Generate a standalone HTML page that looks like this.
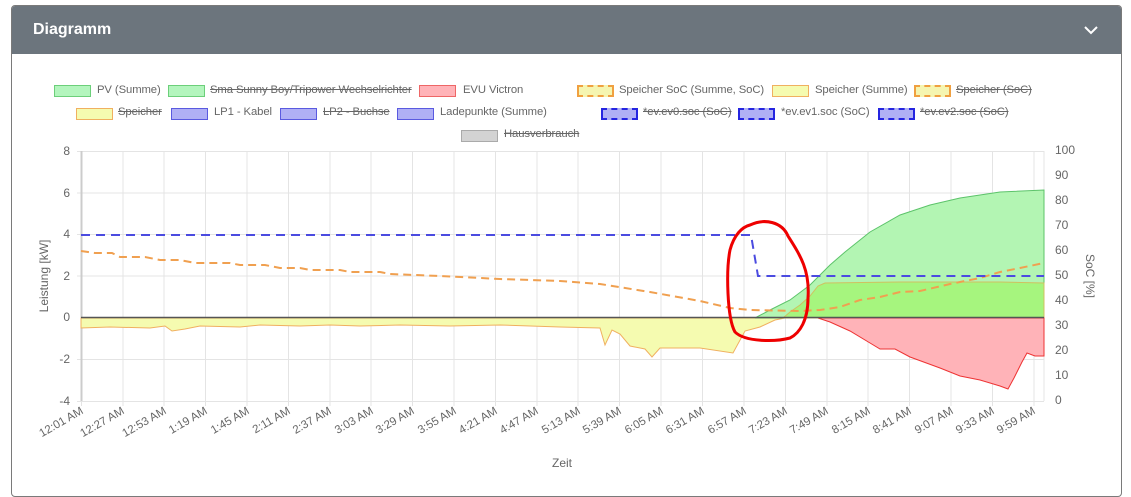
<!DOCTYPE html>
<html><head><meta charset="utf-8"><style>
body{margin:0;width:1131px;height:481px;background:#fff;font-family:"Liberation Sans",sans-serif;overflow:hidden;position:relative}
.card{position:absolute;left:11px;top:5px;width:1109px;height:490px;border:1px solid #7a7a7a;border-radius:4px;background:#fff;overflow:hidden}
.hdr{height:48px;background:#6c757d;color:#fff;font-weight:bold;font-size:16px;line-height:48px;padding-left:21px}
.lg{position:absolute;font-size:11.3px;color:#666;white-space:nowrap;letter-spacing:-0.1px}
.bx{position:absolute;width:37px;height:12px;box-sizing:border-box}
.s{text-decoration:line-through}
.leg{position:absolute;left:0;top:2px;width:1131px;height:150px}
</style></head><body>
<div class="card"><div class="hdr">Diagramm</div></div>
<svg style="position:absolute;left:1083px;top:24px" width="16" height="12"><path d="M2 3 L8 9 L14 3" stroke="#fff" stroke-width="2" fill="none"/></svg>
<div class="leg">
<div class="bx" style="left:54px;top:83px;background:#b3f5bd;border:1px solid #6ccf7a"></div><div class="lg" style="left:97px;top:82px">PV (Summe)</div>
<div class="bx" style="left:168px;top:83px;background:#b3f5bd;border:1px solid #6ccf7a"></div><div class="lg s" style="left:210px;top:82px">Sma Sunny Boy/Tripower Wechselrichter</div>
<div class="bx" style="left:419px;top:83px;background:#ffb3b8;border:1px solid #e66"></div><div class="lg" style="left:463px;top:82px">EVU Victron</div>
<div class="bx" style="left:577px;top:83px;background:#f5f5b0;border:2px dashed #f0a040"></div><div class="lg" style="left:619px;top:82px">Speicher SoC (Summe, SoC)</div>
<div class="bx" style="left:772px;top:83px;background:#f5fbb0;border:1px solid #f0b060"></div><div class="lg" style="left:815px;top:82px">Speicher (Summe)</div>
<div class="bx" style="left:914px;top:83px;background:#f5f5b0;border:2px dashed #f0a040"></div><div class="lg s" style="left:956px;top:82px">Speicher (SoC)</div>

<div class="bx" style="left:76px;top:106px;background:#f5fbb0;border:1px solid #f0b060"></div><div class="lg s" style="left:118px;top:104px">Speicher</div>
<div class="bx" style="left:171px;top:106px;background:#b0b0f5;border:1px solid #5a5ae0"></div><div class="lg" style="left:214px;top:104px">LP1 - Kabel</div>
<div class="bx" style="left:280px;top:106px;background:#b0b0f5;border:1px solid #5a5ae0"></div><div class="lg s" style="left:323px;top:104px">LP2 - Buchse</div>
<div class="bx" style="left:397px;top:106px;background:#b0b0f5;border:1px solid #5a5ae0"></div><div class="lg" style="left:440px;top:104px">Ladepunkte (Summe)</div>
<div class="bx" style="left:601px;top:106px;background:#b0b0f5;border:2px dashed #2525e0"></div><div class="lg s" style="left:643px;top:104px">*ev.ev0.soc (SoC)</div>
<div class="bx" style="left:738px;top:106px;background:#b0b0f5;border:2px dashed #2525e0"></div><div class="lg" style="left:781px;top:104px">*ev.ev1.soc (SoC)</div>
<div class="bx" style="left:878px;top:106px;background:#b0b0f5;border:2px dashed #2525e0"></div><div class="lg s" style="left:920px;top:104px">*ev.ev2.soc (SoC)</div>
<div class="bx" style="left:461px;top:128px;background:#d3d3d3;border:1px solid #aaa"></div><div class="lg s" style="left:504px;top:126px">Hausverbrauch</div>
</div>
<svg style="position:absolute;left:0;top:0" width="1131" height="481" font-family="Liberation Sans, sans-serif" font-size="12" fill="#666">
<g stroke="#e4e4e4" stroke-width="1">
<line x1="77" y1="151.5" x2="1044" y2="151.5"/><line x1="77" y1="193" x2="1044" y2="193"/><line x1="77" y1="234.5" x2="1044" y2="234.5"/><line x1="77" y1="276" x2="1044" y2="276"/><line x1="77" y1="359.5" x2="1044" y2="359.5"/><line x1="77" y1="401.5" x2="1044" y2="401.5"/>
<line x1="81.5" y1="151" x2="81.5" y2="406"/><line x1="123" y1="151" x2="123" y2="406"/><line x1="164" y1="151" x2="164" y2="406"/><line x1="205.5" y1="151" x2="205.5" y2="406"/><line x1="247" y1="151" x2="247" y2="406"/><line x1="288.5" y1="151" x2="288.5" y2="406"/><line x1="330" y1="151" x2="330" y2="406"/><line x1="371" y1="151" x2="371" y2="406"/><line x1="412.5" y1="151" x2="412.5" y2="406"/><line x1="454" y1="151" x2="454" y2="406"/><line x1="495.5" y1="151" x2="495.5" y2="406"/><line x1="537" y1="151" x2="537" y2="406"/><line x1="578" y1="151" x2="578" y2="406"/><line x1="619.5" y1="151" x2="619.5" y2="406"/><line x1="661" y1="151" x2="661" y2="406"/><line x1="702.5" y1="151" x2="702.5" y2="406"/><line x1="744" y1="151" x2="744" y2="406"/><line x1="785.5" y1="151" x2="785.5" y2="406"/><line x1="827" y1="151" x2="827" y2="406"/><line x1="868" y1="151" x2="868" y2="406"/><line x1="909.5" y1="151" x2="909.5" y2="406"/><line x1="951" y1="151" x2="951" y2="406"/><line x1="992.5" y1="151" x2="992.5" y2="406"/><line x1="1034" y1="151" x2="1034" y2="406"/><line x1="1044" y1="151" x2="1044" y2="401"/>
</g>
<line x1="81.5" y1="151" x2="81.5" y2="401" stroke="#ccc" stroke-width="2"/>
<path d="M81 318 L81 328 L110 327 L150 328 L165 326 L172 331 L185 329 L200 326 L240 327 L260 325 L300 326 L330 325 L360 326 L400 325 L450 326 L500 325 L560 327 L600 328 L605 345 L612 330 L620 334 L630 346 L645 349 L652 357 L660 348 L700 348 L733 353 L745 331 L760 327 L775 320 L785 318 Z" fill="#f5fbb0" stroke="#f0b060" stroke-width="1"/>
<path d="M755 318 L770 310 L790 300 L810 285 L830 265 L845 252 L870 232 L900 215 L930 205 L960 198 L1000 192 L1044 190 L1044 318 Z" fill="#b3f5b3" stroke="#5cc36a" stroke-width="1"/>
<path d="M783 318 L790 312 L800 305 L810 296 L818 286 L825 283 L900 282 L1000 282 L1044 283 L1044 318 Z" fill="#a6f57e" stroke="#d0c060" stroke-width="1"/>
<path d="M818 318 L830 322 L850 331 L870 343 L880 349 L895 349 L910 357 L940 368 L960 376 L980 380 L1000 386 L1008 389 L1014 378 L1022 362 L1027 353 L1035 356 L1044 356 L1044 318 Z" fill="#ffb3b8" stroke="#e33" stroke-width="1"/>
<line x1="81" y1="317.5" x2="1044" y2="317.5" stroke="#555" stroke-width="1.5"/>
<path d="M81 251 L95 253 L112 253 L120 257 L145 257 L160 260 L180 260 L195 263 L230 263 L240 265 L265 265 L280 268 L300 268 L310 270 L340 270 L350 272 L380 272 L390 274 L440 276 L500 279 L560 281 L600 284 L650 292 L700 301 L730 308 L750 310 L800 311 L820 310 L840 307 L860 300 L880 297 L900 292 L920 291 L950 284 L980 278 L1000 272 L1020 268 L1044 263" fill="none" stroke="#f0a050" stroke-width="2" stroke-dasharray="8,5"/>
<path d="M81 235 L751 235 L758 276 L1044 276" fill="none" stroke="#4b4be0" stroke-width="2" stroke-dasharray="9,6"/>
<path d="M750 225 C765 218 782 222 788 236 C800 255 810 270 808 298 C808 320 800 333 790 338 C775 342 745 342 735 332 C727 318 726 270 730 250 C734 235 742 227 750 225 Z" fill="none" stroke="#e00" stroke-width="3"/>
<g text-anchor="end"><text x="70" y="155">8</text><text x="70" y="197">6</text><text x="70" y="238">4</text><text x="70" y="280">2</text><text x="70" y="321">0</text><text x="70" y="363">-2</text><text x="70" y="405">-4</text></g>
<g><text x="1055" y="154">100</text><text x="1055" y="179">90</text><text x="1055" y="204">80</text><text x="1055" y="229">70</text><text x="1055" y="254">60</text><text x="1055" y="279">50</text><text x="1055" y="304">40</text><text x="1055" y="329">30</text><text x="1055" y="354">20</text><text x="1055" y="379">10</text><text x="1055" y="404">0</text></g>
<text transform="translate(48,276) rotate(-90)" text-anchor="middle">Leistung [kW]</text>
<text transform="translate(1086,276) rotate(90)" text-anchor="middle">SoC [%]</text>
<text x="562" y="467" text-anchor="middle">Zeit</text>
<g text-anchor="end" font-size="11.5">
<text transform="translate(84,413) rotate(-30)">12:01 AM</text><text transform="translate(125,413) rotate(-30)">12:27 AM</text><text transform="translate(167,413) rotate(-30)">12:53 AM</text><text transform="translate(208,413) rotate(-30)">1:19 AM</text><text transform="translate(250,413) rotate(-30)">1:45 AM</text><text transform="translate(291,413) rotate(-30)">2:11 AM</text><text transform="translate(332,413) rotate(-30)">2:37 AM</text><text transform="translate(374,413) rotate(-30)">3:03 AM</text><text transform="translate(415,413) rotate(-30)">3:29 AM</text><text transform="translate(457,413) rotate(-30)">3:55 AM</text><text transform="translate(498,413) rotate(-30)">4:21 AM</text><text transform="translate(539,413) rotate(-30)">4:47 AM</text><text transform="translate(581,413) rotate(-30)">5:13 AM</text><text transform="translate(622,413) rotate(-30)">5:39 AM</text><text transform="translate(664,413) rotate(-30)">6:05 AM</text><text transform="translate(705,413) rotate(-30)">6:31 AM</text><text transform="translate(747,413) rotate(-30)">6:57 AM</text><text transform="translate(788,413) rotate(-30)">7:23 AM</text><text transform="translate(829,413) rotate(-30)">7:49 AM</text><text transform="translate(871,413) rotate(-30)">8:15 AM</text><text transform="translate(912,413) rotate(-30)">8:41 AM</text><text transform="translate(954,413) rotate(-30)">9:07 AM</text><text transform="translate(995,413) rotate(-30)">9:33 AM</text><text transform="translate(1036,413) rotate(-30)">9:59 AM</text>
</g>
</svg>
</body></html>
